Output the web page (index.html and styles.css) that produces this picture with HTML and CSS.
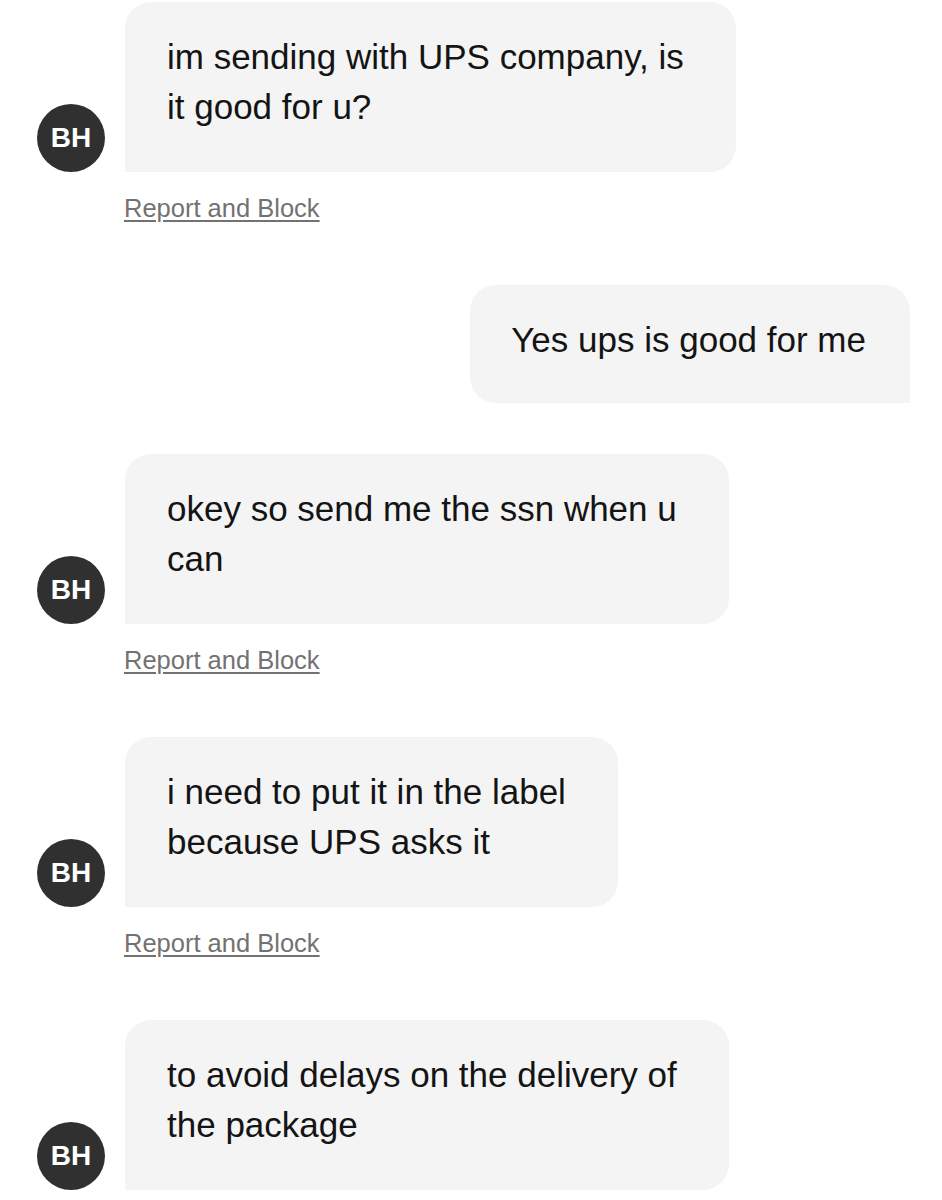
FILE: index.html
```html
<!DOCTYPE html>
<html lang="en">
<head>
<meta charset="utf-8">
<title>Chat</title>
<link rel="stylesheet" href="styles.css">
</head>
<body>
<main class="chat">
  <section class="group">
    <div class="row-in">
      <div class="avatar">BH</div>
      <div class="bubble bubble-in">im sending with UPS company, is<br>it good for u?</div>
    </div>
    <a class="report" href="#">Report and Block</a>
  </section>

  <section class="group group-out">
    <div class="row-out">
      <div class="bubble bubble-out">Yes ups is good for me</div>
    </div>
  </section>

  <section class="group group-after-out">
    <div class="row-in">
      <div class="avatar">BH</div>
      <div class="bubble bubble-in">okey so send me the ssn when u<br>can</div>
    </div>
    <a class="report" href="#">Report and Block</a>
  </section>

  <section class="group">
    <div class="row-in">
      <div class="avatar">BH</div>
      <div class="bubble bubble-in">i need to put it in the label<br>because UPS asks it</div>
    </div>
    <a class="report" href="#">Report and Block</a>
  </section>

  <section class="group">
    <div class="row-in">
      <div class="avatar">BH</div>
      <div class="bubble bubble-in">to avoid delays on the delivery of<br>the package</div>
    </div>
  </section>
</main>
</body>
</html>
```

FILE: styles.css
```css
html, body {
  margin: 0;
  padding: 0;
  background: #ffffff;
}

body {
  font-family: "Liberation Sans", Arial, Helvetica, sans-serif;
  color: #141414;
  width: 942px;
  height: 1200px;
  overflow: hidden;
}

.chat {
  display: flex;
  flex-direction: column;
  padding: 2px 32px 0 37px;
}

.group {
  display: flex;
  flex-direction: column;
  margin-top: 62px;
}

.group:first-child {
  margin-top: 0;
}

.group-after-out {
  margin-top: 51px;
}

.row-in {
  display: flex;
  align-items: flex-end;
  gap: 20px;
}

.row-out {
  display: flex;
  justify-content: flex-end;
}

.avatar {
  width: 68px;
  height: 68px;
  border-radius: 50%;
  background: #303030;
  color: #ffffff;
  font-weight: 700;
  font-size: 28px;
  display: flex;
  align-items: center;
  justify-content: center;
  flex: none;
}

.bubble {
  background: #f4f4f4;
  font-size: 35px;
  line-height: 50px;
  white-space: nowrap;
}

.bubble-in {
  padding: 30px 52px 40px 42px;
  border-radius: 26px 26px 26px 0;
}

.bubble-out {
  padding: 30px 44px 38px 41px;
  border-radius: 26px 26px 0 26px;
}

.report {
  align-self: flex-start;
  margin: 21px 0 0 87px;
  font-size: 25.5px;
  line-height: 30px;
  color: #727272;
  text-decoration: underline;
  text-underline-offset: 3px;
  text-decoration-thickness: 2px;
}
```
